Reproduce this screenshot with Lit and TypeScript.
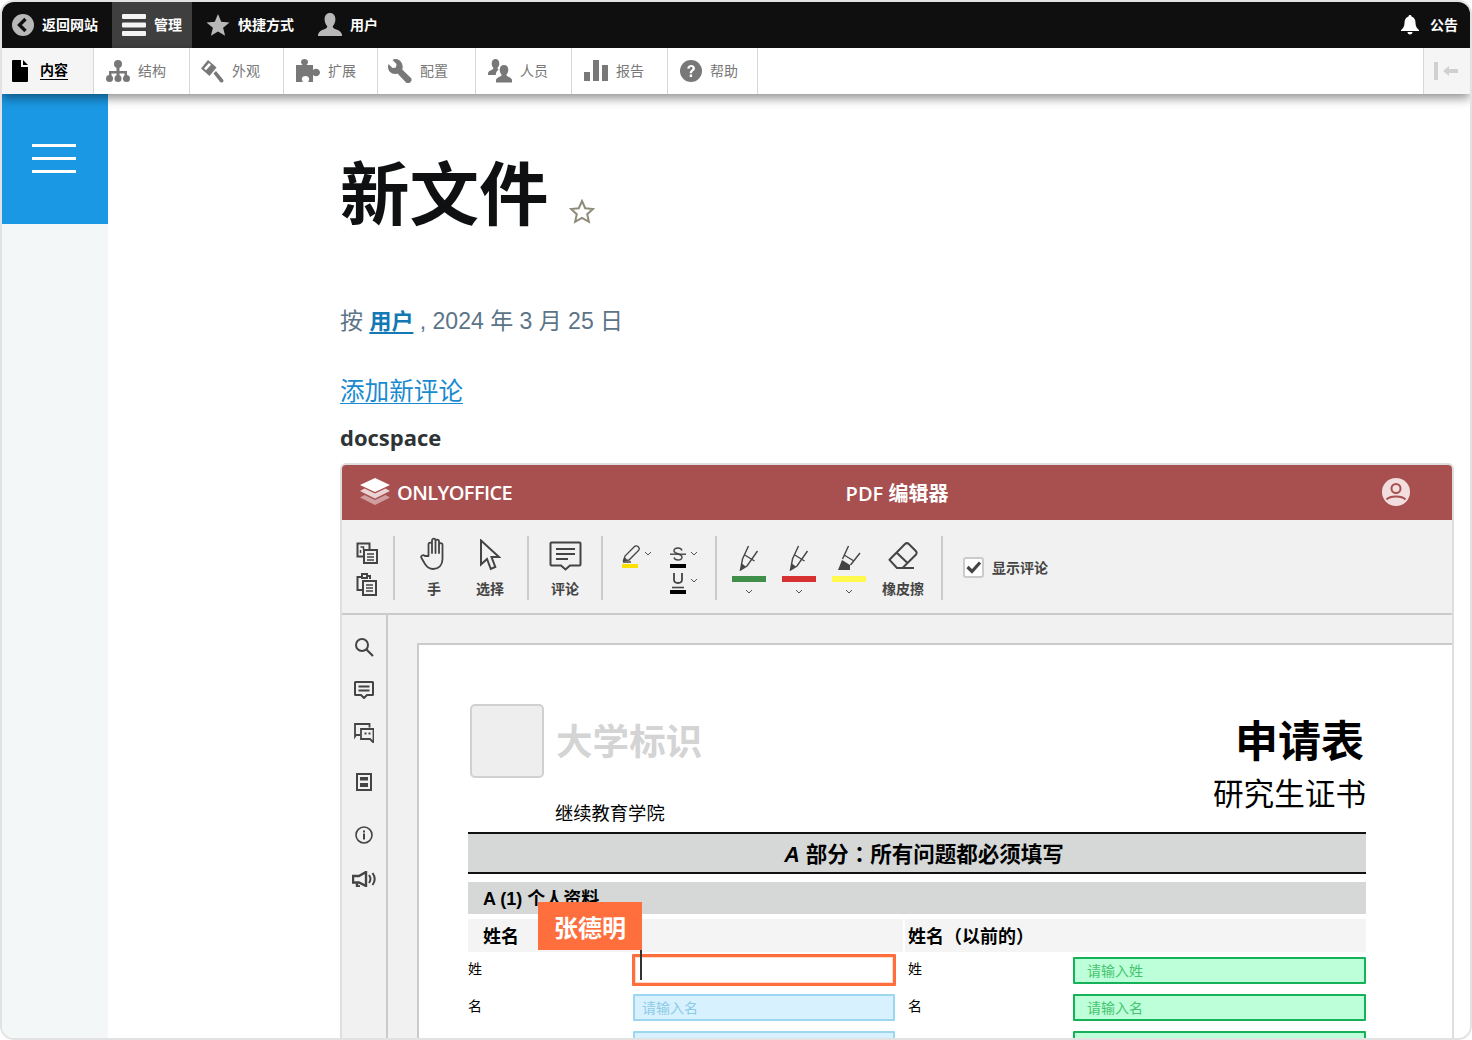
import { LitElement, html, css, svg } from "lit";
import { customElement } from "lit/decorators.js";

const icon = (w: number, h: number, body: unknown) =>
  html`<svg width=${w} height=${h} viewBox="0 0 ${w} ${h}">${body}</svg>`;

// top dark bar
const backIcon = icon(22, 22, svg`<circle cx="11" cy="11" r="11" fill="#b8b8b8"/><path d="M13.5 5 7.5 11l6 6" fill="none" stroke="#111" stroke-width="3.4"/>`);
const menuIcon = icon(24, 24, svg`<rect y="1" width="24" height="5" rx="1" fill="#f4f4f4"/><rect y="9.5" width="24" height="5" rx="1" fill="#f4f4f4"/><rect y="18" width="24" height="5" rx="1" fill="#f4f4f4"/>`);
const starIcon = icon(24, 24, svg`<path d="M12 1l3.2 7.8 8.3.6-6.4 5.3 2 8.1L12 18.4l-7.1 4.4 2-8.1L.5 9.4l8.3-.6z" fill="#b8b8b8"/>`);
const userIcon = icon(24, 24, svg`<path d="M12 0c3.4 0 5.4 2.6 5.4 6.2 0 3-1.2 5.600-2.700 7 .1 1.500 1 2.200 3 3 2.800 1 5.300 2 6.300 5.200v1.600H0v-1.600c1-3.200 3.500-4.200 6.300-5.200 2-.8 2.900-1.500 3-3-1.500-1.400-2.700-4-2.700-7C6.600 2.600 8.600 0 12 0z" fill="#b8b8b8"/>`);
const bellIcon = icon(20, 20, svg`<path d="M10 0c1 0 1.500.7 1.500 1.500C14.500 2.300 15.500 5 15.500 8c0 3.500 1.500 5.500 3.500 7v1H1v-1c2-1.500 3.500-3.500 3.500-7 0-3 1-5.700 4-6.500C8.500.7 9 0 10 0zM7.500 17h5c0 1.500-1 2.500-2.500 2.500S7.500 18.500 7.500 17z" fill="#fff"/>`);

// admin menu, grey icons
const g = "#787878";
const fileIcon = icon(16, 22, svg`<path d="M1 0h8v7h7v14a1 1 0 0 1-1 1H1a1 1 0 0 1-1-1V1a1 1 0 0 1 1-1zM11 0l5 5h-5z" fill="#000"/>`);
const treeIcon = icon(24, 22, svg`<circle cx="12" cy="4" r="4" fill="${g}"/><path d="M10.500 7h3v4h7.500v5h-2.500v-2.500h-5V16h-3v-2.500h-5V16H3v-5h7.500z" fill="${g}"/><circle cx="3.500" cy="18.500" r="3.500" fill="${g}"/><circle cx="12" cy="18.500" r="3.500" fill="${g}"/><circle cx="20.500" cy="18.500" r="3.500" fill="${g}"/>`);
const brushIcon = icon(24, 24, svg`<path d="M8 1 1 9.500 9.500 17 16.500 8.500z" fill="${g}"/><path d="M4 9.500 9 4l2 1.800-5 5.500z" fill="#fff"/><path d="M13.500 14.500 16 12l7 8.500c.8 1.200.5 2-.4 2.700-.9.700-1.800.5-2.600-.5z" fill="${g}"/>`);
const puzzleIcon = icon(24, 24, svg`<path d="M0 6h6.500c-1-1-1.500-2-1.500-3 0-1.800 1.500-3 3.500-3s3.500 1.200 3.500 3c0 1-.5 2-1.500 3H17v5c1-.8 2-1.200 3-1.200 2 0 4 1.500 4 3.700s-2 3.700-4 3.700c-1 0-2-.4-3-1.200V23h-5c.8-1 1.200-2 1.200-3 0-1.800-1.700-3-3.700-3s-3.700 1.200-3.700 3c0 1 .4 2 1.200 3H0z" fill="${g}"/>`);
const wrenchIcon = icon(24, 24, svg`<path d="M8 0c-1.500 0-2.500.3-3.500 1l4 4-.5 3.500-3.500.5-4-4C.2 6 0 7 0 8c0 4 3.200 7 7 7 1 0 1.700-.1 2.500-.5l8.500 9c1 1 2.800 1 4.300-.2 1.500-1.300 1.700-3.300.7-4.300l-8.800-8.500c.4-.8.500-1.700.5-2.500 0-4-3-8-6.700-8z" fill="${g}"/>`);
const peopleIcon = icon(24, 24, svg`<path d="M7.500 0c2.300 0 3.800 1.800 3.800 4.300 0 1.900-.8 3.700-1.800 4.600 0 .8.500 1.300 1.300 1.700-1.800 1.300-3 3-3 5.400H0v-2c.5-1.800 2-2.500 3.500-3.100 1-.5 1.800-1 1.900-2-1-.9-1.700-2.700-1.700-4.600C3.700 1.800 5.200 0 7.500 0z" fill="${g}"/><path d="M16 6c2.700 0 4.300 2 4.300 4.800 0 2-.8 3.900-1.900 4.900 0 1 .8 1.500 2 2 1.500.7 3 1.300 3.600 3.100V23.500H8V20.800c.6-1.800 2.100-2.400 3.600-3.100 1.200-.5 2-1 2-2-1.100-1-1.900-2.900-1.900-4.900C11.700 8 13.300 6 16 6z" fill="${g}"/>`);
const barsIcon = icon(24, 22, svg`<rect y="12" width="6" height="9" fill="${g}"/><rect x="9" y="0" width="6" height="21" fill="${g}"/><rect x="18" y="5" width="6" height="16" fill="${g}"/>`);
const helpIcon = icon(22, 22, svg`<circle cx="11" cy="11" r="11" fill="${g}"/><path d="M7.200 8.500C7.500 6.300 9 5 11.200 5c2.300 0 3.800 1.300 3.800 3.200 0 2.700-3 2.700-3 5h-2.300c0-3.300 2.800-3.300 2.800-5 0-.7-.5-1.200-1.300-1.200-1 0-1.500.6-1.700 1.700z" fill="#fff"/><rect x="9.700" y="14.500" width="2.400" height="2.500" fill="#fff"/>`);
const collapseIcon = icon(24, 18, svg`<rect x="0" y="0" width="4" height="18" fill="#d0d0d0"/><path d="M9 9l6-5v3h9v4h-9v3z" fill="#d0d0d0"/>`);

// editor toolbar, thin dark strokes
const d = "#444";
const copyIcon = icon(22, 22, svg`<path d="M8 14.500H1.500V1.500h12V7" fill="none" stroke="${d}" stroke-width="2"/><path d="M4.500 5h3v2.500M4.500 8v3" fill="none" stroke="${d}" stroke-width="1.500"/><rect x="8" y="8" width="13" height="13" fill="none" stroke="${d}" stroke-width="2"/><path d="M11 12h7M11 15h7M11 18h7" stroke="${d}" stroke-width="1.400"/>`);
const pasteIcon = icon(22, 24, svg`<path d="M7 18H1.500V5h5M6 2h5v4H6zM11 4h3v3" fill="none" stroke="${d}" stroke-width="2"/><rect x="7" y="9" width="13" height="14" fill="none" stroke="${d}" stroke-width="2"/><path d="M10 13h7M10 16h7M10 19h7" stroke="${d}" stroke-width="1.400"/>`);
const handIcon = icon(28, 34, svg`<path d="M8.500 19V7.500c0-2.500 3.500-2.500 3.500 0V16V3.500c0-2.500 3.500-2.500 3.500 0V16V4.500c0-2.500 3.500-2.500 3.500 0V16V8c0-2.500 3.500-2.500 3.500 0v14c0 6-3.500 10-9.500 10-4 0-6-2-8-5l-3.500-6c-1.200-2.200 1.800-3.800 3.300-2z" fill="none" stroke="${d}" stroke-width="1.800" stroke-linejoin="round"/>`);
const cursorIcon = icon(22, 32, svg`<path d="M2 1.500v24l6-5.500 3.800 10 4.500-2L12.500 18H20z" fill="none" stroke="${d}" stroke-width="2" stroke-linejoin="miter"/>`);
const commentIcon = icon(33, 30, svg`<path d="M2.500 1.500h28a1 1 0 0 1 1 1v21a1 1 0 0 1-1 1H21l-4.500 4-4.500-4H2.500a1 1 0 0 1-1-1v-21a1 1 0 0 1 1-1z" fill="none" stroke="${d}" stroke-width="2"/><path d="M7 8h19M7 13h19M7 18h12" stroke="${d}" stroke-width="2"/>`);
const pencilIcon = icon(18, 18, svg`<path d="M1.500 15.500 3 11 12.500 1.500c1-1 3-.5 4 .5.800 1 1 2.500 0 3.500L7 15zM1 17h8" fill="none" stroke="${d}" stroke-width="1.300"/><path d="M1.500 15.500 2.500 12l2.500 2.500z" fill="${d}"/>`);
const strikeIcon = icon(16, 18, svg`<path d="M12 5.500C11.500 4 10 3 8 3 6 3 4 4 4 6c0 3 8 2.500 8 6 0 1.500-1.500 3-4 3-2 0-3.500-.8-4-2.500" fill="none" stroke="${d}" stroke-width="1.400"/><path d="M0 9.200h16" stroke="${d}" stroke-width="1.400"/>`);
const underIcon = icon(16, 16, svg`<path d="M4 0v6.500c0 2.400 1.600 3.500 4 3.500s4-1.100 4-3.500V0" fill="none" stroke="${d}" stroke-width="1.800"/><path d="M2 14.500h12" stroke="${d}" stroke-width="1.600"/>`);
const penIcon = icon(20, 26, svg`<path d="M9.500 1 3.500 14 1.500 25 8 21 18.500 6M5 9.500l10.500 6.500" fill="none" stroke="${d}" stroke-width="1.400"/><path d="M1.500 25 2.800 18.500l4 3z" fill="${d}"/>`);
const markerIcon = icon(24, 26, svg`<path d="M11.500 1 5.500 14M23 8 13.500 20M7 10l10 6" fill="none" stroke="${d}" stroke-width="1.400"/><path d="M1 25 5 15l8 5v5z" fill="${d}"/>`);
const eraserIcon = icon(30, 28, svg`<path d="M9 26 1.500 17.800 17 2c1.200-1.100 2.600-1.100 3.800 0l7 7c1 1.100 1 2.600 0 3.800L14.500 26zM26 26H9M8.500 10.500l10.500 10" fill="none" stroke="${d}" stroke-width="2" stroke-linejoin="round"/>`);
const chevron = icon(8, 6, svg`<path d="M1 1l3 3 3-3" fill="none" stroke="#555" stroke-width="1"/>`);
const checkIcon = icon(16, 14, svg`<path d="M1.500 7 6 11.500 14 2.500" fill="none" stroke="#444" stroke-width="3.200"/>`);

// left rail of the editor
const searchIcon = icon(20, 20, svg`<circle cx="8" cy="8" r="6" fill="none" stroke="${d}" stroke-width="2"/><path d="M12.500 12.500 19 19" stroke="${d}" stroke-width="2.200"/>`);
const railCommentIcon = icon(20, 18, svg`<path d="M1.500 1h17a.5.5 0 0 1 .5.5v12a.5.5 0 0 1-.5.5H13l-3 3-3-3H1.500a.5.5 0 0 1-.5-.5v-12a.5.5 0 0 1 .5-.5z" fill="none" stroke="${d}" stroke-width="2"/><path d="M4.500 5.500h11M4.500 9.500h11" stroke="${d}" stroke-width="1.800"/>`);
const chatIcon = icon(20, 20, svg`<path d="M6 12H2l-1 1.500V1h14.500v3.500" fill="none" stroke="${d}" stroke-width="1.800"/><path d="M7 6h12.500v13.500L16 16H7z" fill="none" stroke="${d}" stroke-width="1.800"/><path d="M10.500 10.500h2M14.500 10.500h2" stroke="${d}" stroke-width="2"/>`);
const pageIcon = icon(16, 18, svg`<rect x="1" y="1" width="14" height="16" fill="none" stroke="${d}" stroke-width="2"/><rect x="4" y="4" width="8" height="3.500" fill="${d}"/><rect x="4" y="10" width="8" height="4" fill="${d}"/>`);
const infoIcon = icon(18, 18, svg`<circle cx="9" cy="9" r="8" fill="none" stroke="${d}" stroke-width="1.600"/><rect x="8" y="7.500" width="2" height="6" fill="${d}"/><rect x="8" y="4.500" width="2" height="2" fill="${d}"/>`);
const speakerIcon = icon(24, 16, svg`<path d="M1 5h6l7-4v14l-7-3.500H1zM5 11v4.500h3" fill="none" stroke="${d}" stroke-width="2.400"/><path d="M17 4c1.800 2.500 1.800 5.500 0 8M20.500 2c2.800 3.800 2.800 8.200 0 12" fill="none" stroke="${d}" stroke-width="2"/>`);

const logoIcon = icon(32, 28, svg`<path d="M5.500 17 1 19.500 16 27 31 19.500 26.500 17 16 22z" fill="#fff" fill-opacity=".45"/><path d="M5.500 10.500 1 13 16 20.500 31 13 26.500 10.500 16 15.500z" fill="#fff" fill-opacity=".75"/><path d="M16 0 31 7 16 14 1 7z" fill="#fff"/>`);
const avatarIcon = icon(28, 28, svg`<circle cx="14" cy="14" r="14" fill="#f2dede"/><circle cx="14" cy="10.500" r="4.500" fill="none" stroke="#a85050" stroke-width="2"/><path d="M4.500 21.500C8 17.500 20 17.500 23.500 21.500" fill="none" stroke="#a85050" stroke-width="2"/>`);
const favStar = icon(26, 25, svg`<path d="M13 2l3.200 7.200 7.800.8-5.800 5.200 1.700 7.700L13 19l-6.900 3.900 1.700-7.700L2 10l7.800-.8z" fill="none" stroke="#8f8b78" stroke-width="2"/>`);

const adminTabs = [
  { label: "内容", icon: fileIcon, cls: "active" },
  { label: "结构", icon: treeIcon, cls: "" },
  { label: "外观", icon: brushIcon, cls: "tight" },
  { label: "扩展", icon: puzzleIcon, cls: "" },
  { label: "配置", icon: wrenchIcon, cls: "tight" },
  { label: "人员", icon: peopleIcon, cls: "" },
  { label: "报告", icon: barsIcon, cls: "" },
  { label: "帮助", icon: helpIcon, cls: "" },
];

@customElement("app-root")
export class AppRoot extends LitElement {
  static styles = css`
    :host {
      display: block;
      width: 1472px;
      height: 1040px;
      font-family: "Liberation Sans", "Noto Sans CJK SC", sans-serif;
      background: #fff;
    }
    .window {
      position: relative;
      box-sizing: border-box;
      width: 1472px;
      height: 1040px;
      border: 2px solid #e2e2e2;
      border-radius: 14px;
      overflow: hidden;
      display: flex;
      flex-direction: column;
    }
    .topbar {
      flex: none;
      height: 46px;
      background: #0f0f0f;
      display: flex;
      gap: 4px;
      color: #fff;
      font-size: 14px;
      font-weight: 700;
    }
    .topitem {
      display: flex;
      align-items: center;
      gap: 8px;
      padding: 0 10px;
    }
    .topitem span {
      margin-top: -2px;
    }
    .topitem.on {
      background: #3f3f3f;
    }
    .topitem.push {
      margin-left: auto;
      padding-right: 12px;
      gap: 10px;
    }
    .adminbar {
      position: relative;
      z-index: 2;
      flex: none;
      height: 46px;
      background: #fff;
      display: grid;
      grid-template-columns: 92px 96px 94px 94px 98px 96px 96px 90px 1fr 47px;
      box-shadow: 0 4px 10px rgba(0, 0, 0, 0.45);
      font-size: 14px;
      color: #787878;
    }
    .tab {
      display: flex;
      align-items: center;
      gap: 8px;
      padding-left: 12px;
      border-right: 1px solid #d8d8d8;
    }
    .tab span {
      margin-top: -2px;
    }
    .tab.tight {
      padding-left: 10px;
    }
    .tab.active {
      padding-left: 10px;
      background: #f5f5f5;
      color: #000;
      font-weight: 700;
      gap: 12px;
    }
    .tab.active span {
      border-bottom: 1px solid #000;
      line-height: 18px;
    }
    .collapse {
      grid-column: 10;
      display: flex;
      align-items: center;
      padding-left: 10px;
      background: #f5f5f5;
      border-left: 1px solid #d8d8d8;
    }
    .body {
      flex: 1;
      min-height: 0;
      display: flex;
    }
    .side {
      flex: none;
      width: 106px;
      background: #f4f7f7;
    }
    .burger {
      box-sizing: border-box;
      height: 130px;
      padding: 0 2px 2px 0;
      background: #1b98e3;
      display: flex;
      flex-direction: column;
      align-items: center;
      justify-content: center;
      gap: 10px;
    }
    .burger i {
      display: block;
      width: 44px;
      height: 3px;
      background: #fff;
    }
    .main {
      flex: 1;
      min-width: 0;
      padding: 48px 16px 0 232px;
    }
    .title {
      display: flex;
      align-items: flex-end;
      gap: 20px;
      height: 108px;
    }
    h1 {
      margin: 0;
      font-size: 69.5px;
      line-height: 108px;
      font-weight: 700;
      color: #0e1011;
    }
    .title svg {
      margin-bottom: 26px;
    }
    .byline {
      margin-top: 53px;
      font-size: 23px;
      line-height: 36px;
      color: #5b7487;
    }
    .byline a {
      color: #1279b5;
      font-size: 22px;
      font-weight: 700;
      text-decoration: underline;
      text-underline-offset: 3px;
    }
    .addc {
      display: inline-block;
      margin-top: 35px;
      font-size: 24.6px;
      line-height: 34px;
      color: #1a8ad0;
      text-decoration: underline;
      text-underline-offset: 3px;
      text-decoration-thickness: 1px;
    }
    .doclabel {
      margin-top: 13px;
      font-family: "Open Sans", "Noto Sans CJK SC", sans-serif;
      font-size: 22px;
      font-weight: 700;
      line-height: 30px;
      color: #2e3436;
    }
    .editor {
      margin-top: 11px;
      border: 2px solid #dedede;
      border-radius: 6px 6px 0 0;
      overflow: hidden;
    }
    .ehead {
      height: 55px;
      background: #a85050;
      display: grid;
      grid-template-columns: 1fr auto 1fr;
      align-items: center;
      color: #fff;
      padding: 0 42px 1px;
      box-sizing: border-box;
    }
    .brand {
      display: flex;
      align-items: center;
      gap: 6px;
      margin-left: -25px;
      font-family: "Open Sans", sans-serif;
      font-weight: 600;
      font-size: 20px;
      letter-spacing: -0.6px;
    }
    .etitle {
      font-family: "Open Sans", "Noto Sans CJK SC", sans-serif;
      font-size: 20px;
      font-weight: 600;
    }
    .eavatar {
      justify-self: end;
      display: flex;
    }
    .etools {
      height: 95px;
      box-sizing: border-box;
      background: #f1f1f1;
      border-bottom: 2px solid #cbcbcb;
      display: flex;
      align-items: stretch;
      padding: 16px 0 13px;
      font-size: 14px;
      font-weight: 700;
      color: #444;
    }
    .sep {
      flex: none;
      width: 2px;
      background: #cbcbcb;
    }
    .col {
      flex: none;
      display: flex;
      flex-direction: column;
      align-items: center;
    }
    .col .ic {
      box-sizing: border-box;
      height: 43px;
      display: flex;
      justify-content: center;
      align-items: flex-start;
    }
    .col .lb {
      line-height: 20px;
    }
    .clip {
      flex: none;
      width: 51px;
      padding-left: 14px;
      box-sizing: border-box;
      display: flex;
      flex-direction: column;
      gap: 8px;
      padding-top: 6px;
    }
    .hand {
      width: 56px;
      margin-left: 11px;
    }
    .hand .ic {
      padding-top: 1px;
    }
    .sel {
      width: 56px;
      margin-right: 9px;
    }
    .sel .ic {
      padding-top: 3px;
    }
    .cmt {
      width: 72px;
    }
    .cmt .ic {
      padding-top: 5px;
    }
    .marks {
      flex: none;
      width: 112px;
      display: grid;
      grid-template-columns: 48px 40px;
      padding-left: 19px;
      box-sizing: border-box;
      align-content: start;
      padding-top: 9px;
      row-gap: 5px;
    }
    .mk {
      display: grid;
      grid-template-columns: auto auto;
      justify-content: start;
      column-gap: 4px;
      align-items: center;
    }
    .mk b {
      grid-column: 1;
      display: block;
      width: 16px;
      height: 4px;
      margin-top: 1px;
    }
    .pens {
      flex: none;
      display: flex;
      gap: 16px;
      padding: 9px 0 0 15px;
    }
    .pen {
      width: 34px;
      display: flex;
      flex-direction: column;
      align-items: center;
    }
    .pen b {
      display: block;
      width: 34px;
      height: 6px;
      margin: 5px 0 7px;
    }
    .erase {
      width: 68px;
      margin: 0 4px 0 3px;
    }
    .erase .ic {
      padding-top: 6px;
    }
    .showc {
      display: flex;
      align-items: center;
      gap: 8px;
      margin-left: 20px;
      font-size: 14px;
      padding-bottom: 2px;
    }
    .box {
      box-sizing: border-box;
      width: 21px;
      height: 21px;
      border: 2px solid #cbcbcb;
      border-radius: 3px;
      background: #fff;
      display: flex;
      align-items: center;
      justify-content: center;
    }
    .ework {
      display: flex;
      height: 480px;
      background: #f1f1f1;
    }
    .rail {
      flex: none;
      width: 46px;
      box-sizing: border-box;
      border-right: 2px solid #cbcbcb;
      display: flex;
      flex-direction: column;
      align-items: center;
      gap: 24px;
      padding-top: 22px;
    }
    .rail .wide {
      display: flex;
      margin-top: 6px;
    }
    .rail .wider {
      display: flex;
      margin-top: 11px;
    }
    .rail .horn {
      display: flex;
      margin-top: 3px;
    }
    .canvas {
      flex: 1;
      padding: 28px 0 0 29px;
      min-width: 0;
    }
    .page {
      position: relative;
      height: 500px;
      background: #fff;
      border-top: 2px solid #cbcbcb;
      border-left: 2px solid #cbcbcb;
      box-sizing: border-box;
      padding: 59px 86px 0 49px;
      color: #000;
    }
    .phead {
      display: flex;
      justify-content: space-between;
    }
    .plogo {
      display: flex;
      align-items: center;
      gap: 12px;
      height: 74px;
      margin-left: 2px;
      font-size: 36.6px;
      font-weight: 700;
      color: #d4d4d4;
    }
    .plogo span {
      margin-top: -4px;
    }
    .plogo i {
      display: block;
      box-sizing: border-box;
      width: 74px;
      height: 74px;
      background: #eeeeee;
      border: 2px solid #d0d0d0;
      border-radius: 5px;
    }
    .ptitle {
      text-align: right;
      padding-top: 10px;
    }
    .ptitle div:first-child {
      font-size: 43px;
      font-weight: 700;
      line-height: 56px;
      margin-right: 2px;
    }
    .ptitle div:last-child {
      margin-top: 3px;
      font-size: 30.6px;
      line-height: 43px;
    }
    .school {
      font-size: 18.3px;
      line-height: 26px;
      margin: -15px 0 5px 87px;
    }
    .secbar {
      height: 42px;
      box-sizing: border-box;
      border-top: 2px solid #111;
      border-bottom: 2px solid #111;
      background: #d5d8d7;
      text-align: center;
      font-size: 21.5px;
      font-weight: 700;
      line-height: 38px;
      padding-left: 14px;
    }
    .secbar em {
      font-style: italic;
    }
    .secbar span {
      font-family: "Noto Sans CJK TC", sans-serif;
    }
    .sub {
      margin-top: 8px;
      height: 32px;
      background: #d5d8d7;
      padding-left: 15px;
      font-size: 18px;
      font-weight: 700;
      line-height: 34px;
      overflow: hidden;
    }
    .form {
      display: grid;
      grid-template-columns: 435px 461px;
      column-gap: 2px;
      margin-top: 5px;
    }
    .fhead {
      height: 33px;
      background: #f4f4f4;
      font-size: 18px;
      font-weight: 700;
      line-height: 36px;
      padding-left: 15px;
    }
    .fhead.right {
      padding-left: 3px;
    }
    .rows {
      display: flex;
      flex-direction: column;
      gap: 10px;
      padding-top: 5px;
      font-size: 14px;
    }
    .row {
      display: grid;
      align-items: start;
      line-height: 22px;
    }
    .row span {
      padding-top: 1px;
    }
    .rows.left .row {
      grid-template-columns: 165px 262px;
    }
    .rows.right {
      padding-left: 3px;
    }
    .rows.right .row {
      grid-template-columns: 165px 293px;
    }
    .input {
      box-sizing: border-box;
      height: 27px;
      border-radius: 1px;
      font-size: 14px;
      line-height: 25px;
    }
    .input.blue {
      background: #d7f1fe;
      border: 2px solid #9dd6ef;
      color: #8ccbe6;
      padding-left: 7px;
    }
    .input.green {
      background: #bdffd8;
      border: 2px solid #16b25a;
      color: #45c470;
      padding-left: 12px;
    }
    .input.live {
      height: 32px;
      margin: -3px -1px -2px;
      border: 3px solid #ff6f3d;
      outline: 1px solid rgba(255, 111, 61, 0.25);
      outline-offset: -4px;
      background: #fff;
    }
    .tag {
      position: absolute;
      left: 119px;
      top: 257px;
      width: 104px;
      height: 48px;
      background: #ff6f3d;
      color: #fff;
      font-size: 24px;
      font-weight: 700;
      display: flex;
      align-items: center;
      justify-content: center;
    }
    .caret {
      position: absolute;
      left: 221px;
      top: 305px;
      width: 2px;
      height: 30px;
      background: #333;
    }
  `;

  render() {
    return html`
      <div class="window">
        <div class="topbar">
          <div class="topitem">${backIcon}<span>返回网站</span></div>
          <div class="topitem on">${menuIcon}<span>管理</span></div>
          <div class="topitem">${starIcon}<span>快捷方式</span></div>
          <div class="topitem">${userIcon}<span>用户</span></div>
          <div class="topitem push">${bellIcon}<span>公告</span></div>
        </div>
        <div class="adminbar">
          ${adminTabs.map((t) => html`<div class="tab ${t.cls}">${t.icon}<span>${t.label}</span></div>`)}
          <div class="collapse">${collapseIcon}</div>
        </div>
        <div class="body">
          <div class="side">
            <div class="burger"><i></i><i></i><i></i></div>
          </div>
          <div class="main">
            <div class="title"><h1>新文件</h1>${favStar}</div>
            <div class="byline">按 <a>用户</a> , 2024 年 3 月 25 日</div>
            <a class="addc">添加新评论</a>
            <div class="doclabel">docspace</div>
            ${this.renderEditor()}
          </div>
        </div>
      </div>
    `;
  }

  renderEditor() {
    return html`
      <div class="editor">
        <div class="ehead">
          <div class="brand">${logoIcon}<span>ONLYOFFICE</span></div>
          <div class="etitle">PDF 编辑器</div>
          <div class="eavatar">${avatarIcon}</div>
        </div>
        <div class="etools">
          <div class="clip">${copyIcon}${pasteIcon}</div>
          <div class="sep"></div>
          <div class="col hand"><div class="ic">${handIcon}</div><div class="lb">手</div></div>
          <div class="col sel"><div class="ic">${cursorIcon}</div><div class="lb">选择</div></div>
          <div class="sep"></div>
          <div class="col cmt"><div class="ic">${commentIcon}</div><div class="lb">评论</div></div>
          <div class="sep"></div>
          <div class="marks">
            <div class="mk">${pencilIcon}${chevron}<b style="background:#ffe000"></b></div>
            <div class="mk">${strikeIcon}${chevron}<b style="background:#000"></b></div>
            <div></div>
            <div class="mk">${underIcon}${chevron}<b style="background:#000"></b></div>
          </div>
          <div class="sep"></div>
          <div class="pens">
            <div class="pen">${penIcon}<b style="background:#3f8f4a"></b>${chevron}</div>
            <div class="pen">${penIcon}<b style="background:#d63031"></b>${chevron}</div>
            <div class="pen">${markerIcon}<b style="background:#fff94d"></b>${chevron}</div>
          </div>
          <div class="col erase"><div class="ic">${eraserIcon}</div><div class="lb">橡皮擦</div></div>
          <div class="sep"></div>
          <div class="showc"><div class="box">${checkIcon}</div><span>显示评论</span></div>
        </div>
        <div class="ework">
          <div class="rail">
            ${searchIcon}${railCommentIcon}${chatIcon}
            <div class="wide">${pageIcon}</div>
            <div class="wider">${infoIcon}</div>
            <div class="horn">${speakerIcon}</div>
          </div>
          <div class="canvas">${this.renderPage()}</div>
        </div>
      </div>
    `;
  }

  renderPage() {
    return html`
      <div class="page">
        <div class="phead">
          <div class="plogo"><i></i><span>大学标识</span></div>
          <div class="ptitle"><div>申请表</div><div>研究生证书</div></div>
        </div>
        <div class="school">继续教育学院</div>
        <div class="secbar"><em>A</em> 部分<span>：</span>所有问题都必须填写</div>
        <div class="sub">A (1) 个人资料</div>
        <div class="form">
          <div>
            <div class="fhead">姓名</div>
            <div class="rows left">
              <div class="row"><span>姓</span><div class="input live"></div></div>
              <div class="row"><span>名</span><div class="input blue">请输入名</div></div>
              <div class="row"><span></span><div class="input blue"></div></div>
            </div>
          </div>
          <div>
            <div class="fhead right">姓名（以前的）</div>
            <div class="rows right">
              <div class="row"><span>姓</span><div class="input green">请输入姓</div></div>
              <div class="row"><span>名</span><div class="input green">请输入名</div></div>
              <div class="row"><span></span><div class="input green"></div></div>
            </div>
          </div>
        </div>
        <div class="tag">张德明</div>
        <div class="caret"></div>
      </div>
    `;
  }
}
